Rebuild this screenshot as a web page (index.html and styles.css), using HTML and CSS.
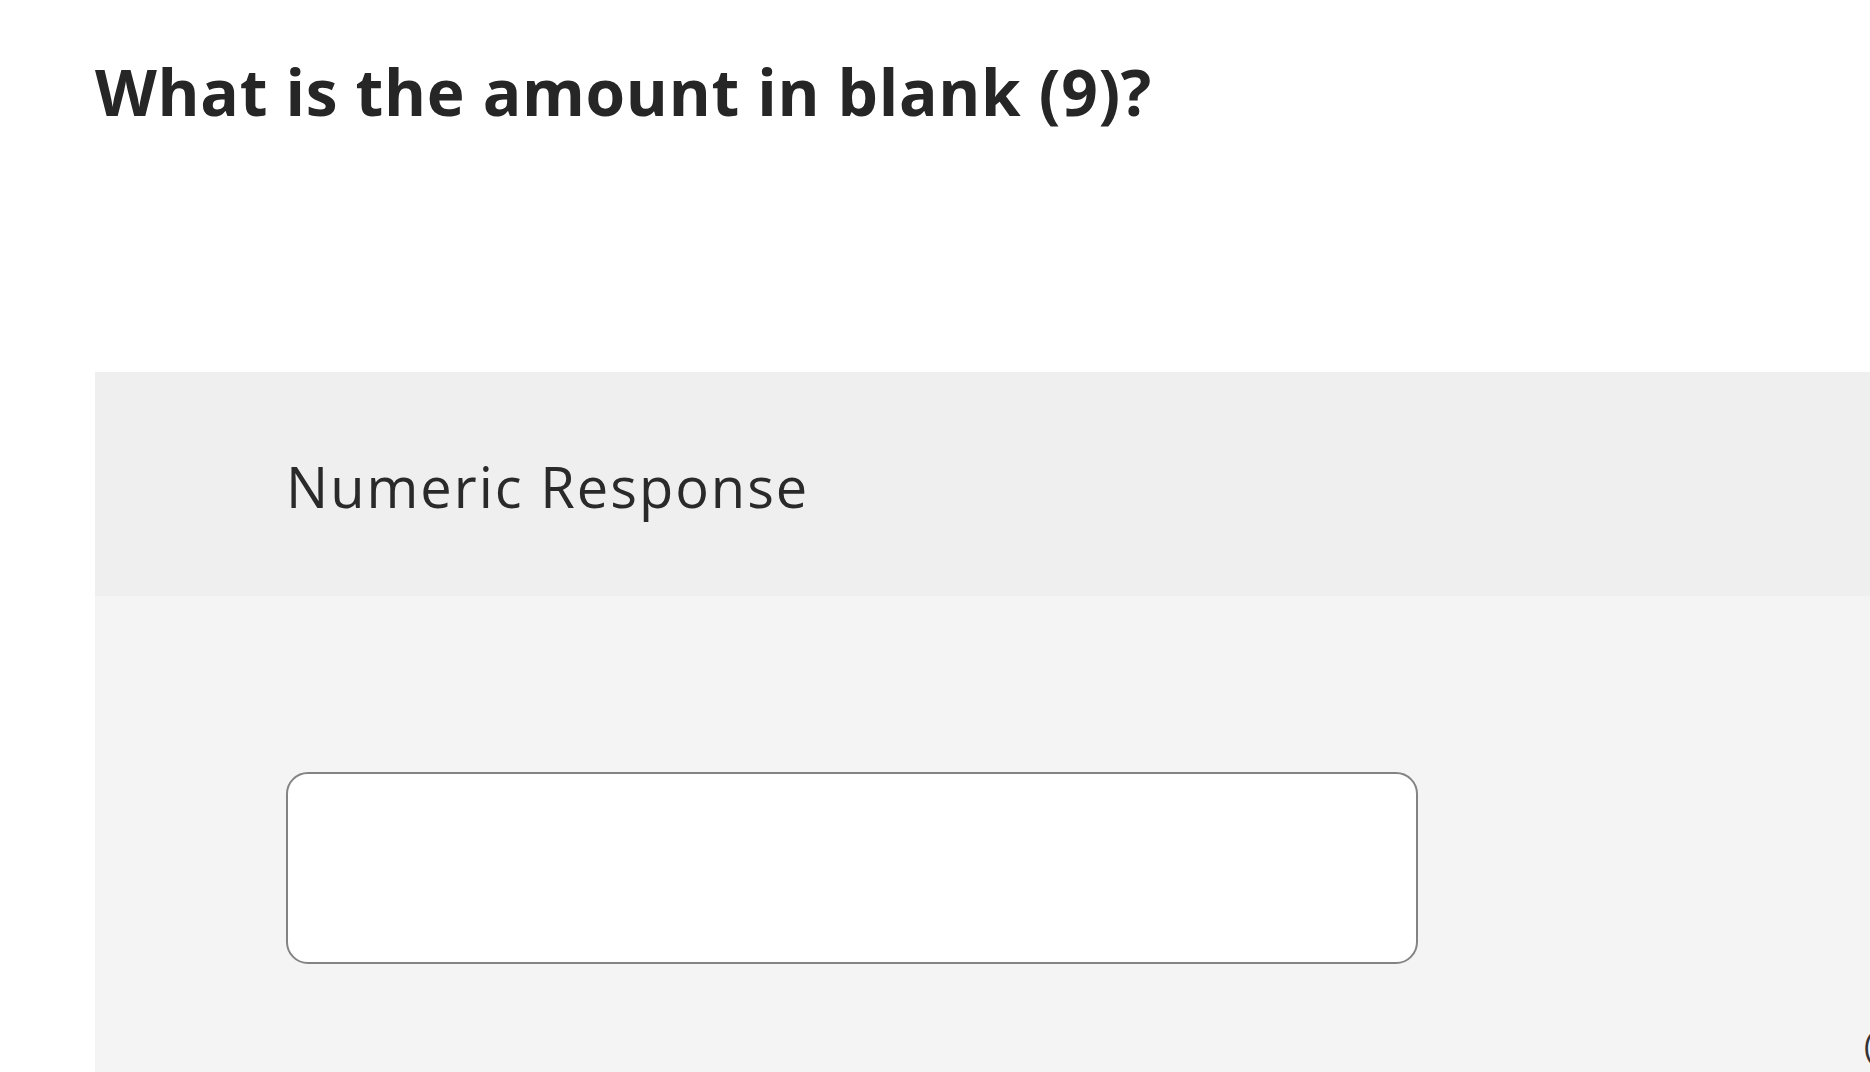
FILE: index.html
```html
<!DOCTYPE html>
<html lang="en">
<head>
  <meta charset="UTF-8">
  <title>Question 9</title>
  <link rel="stylesheet" href="styles.css">
</head>
<body>
  <div class="page">
    <h1 class="prompt">What is the amount in blank (9)?</h1>
    <div class="answerPanel">
      <div class="answerHeader">Numeric Response</div>
      <div class="answerBody">
        <input class="answerInput" type="text" aria-label="Numeric Response">
      </div>
    </div>
    <span class="edgeGlyph">(</span>
  </div>
</body>
</html>
```

FILE: styles.css
```css
* {
  font-family: "Open Sans", Lato, Arial, sans-serif;
  box-sizing: border-box;
}
html, body {
  margin: 0;
  height: 100%;
  overflow: hidden;
  background: #fff;
}
.page {
  position: relative;
  height: 100%;
  padding-top: 52px;
}
.prompt {
  margin: 0 0 0 95px;
  font-size: 64px;
  font-weight: 700;
  line-height: 80px;
  color: #262626;
  letter-spacing: 0.7px;
}
.answerPanel {
  margin: 240px 0 0 95px;
  background: #f4f4f4;
  height: 700px;
}
.answerHeader {
  background: #efefef;
  height: 224px;
  padding: 79px 0 0 191px;
  font-size: 56px;
  line-height: 70px;
  color: #2a2a2a;
  letter-spacing: 2px;
}
.answerBody {
  padding: 176px 0 0 191px;
}
.answerInput {
  display: block;
  width: 1132px;
  height: 192px;
  border: 2px solid #838383;
  border-radius: 22px;
  background: #fff;
  outline: none;
}
.edgeGlyph {
  position: absolute;
  left: 1864px;
  top: 1026px;
  font-size: 32px;
  line-height: 40px;
  color: #333;
}
```
